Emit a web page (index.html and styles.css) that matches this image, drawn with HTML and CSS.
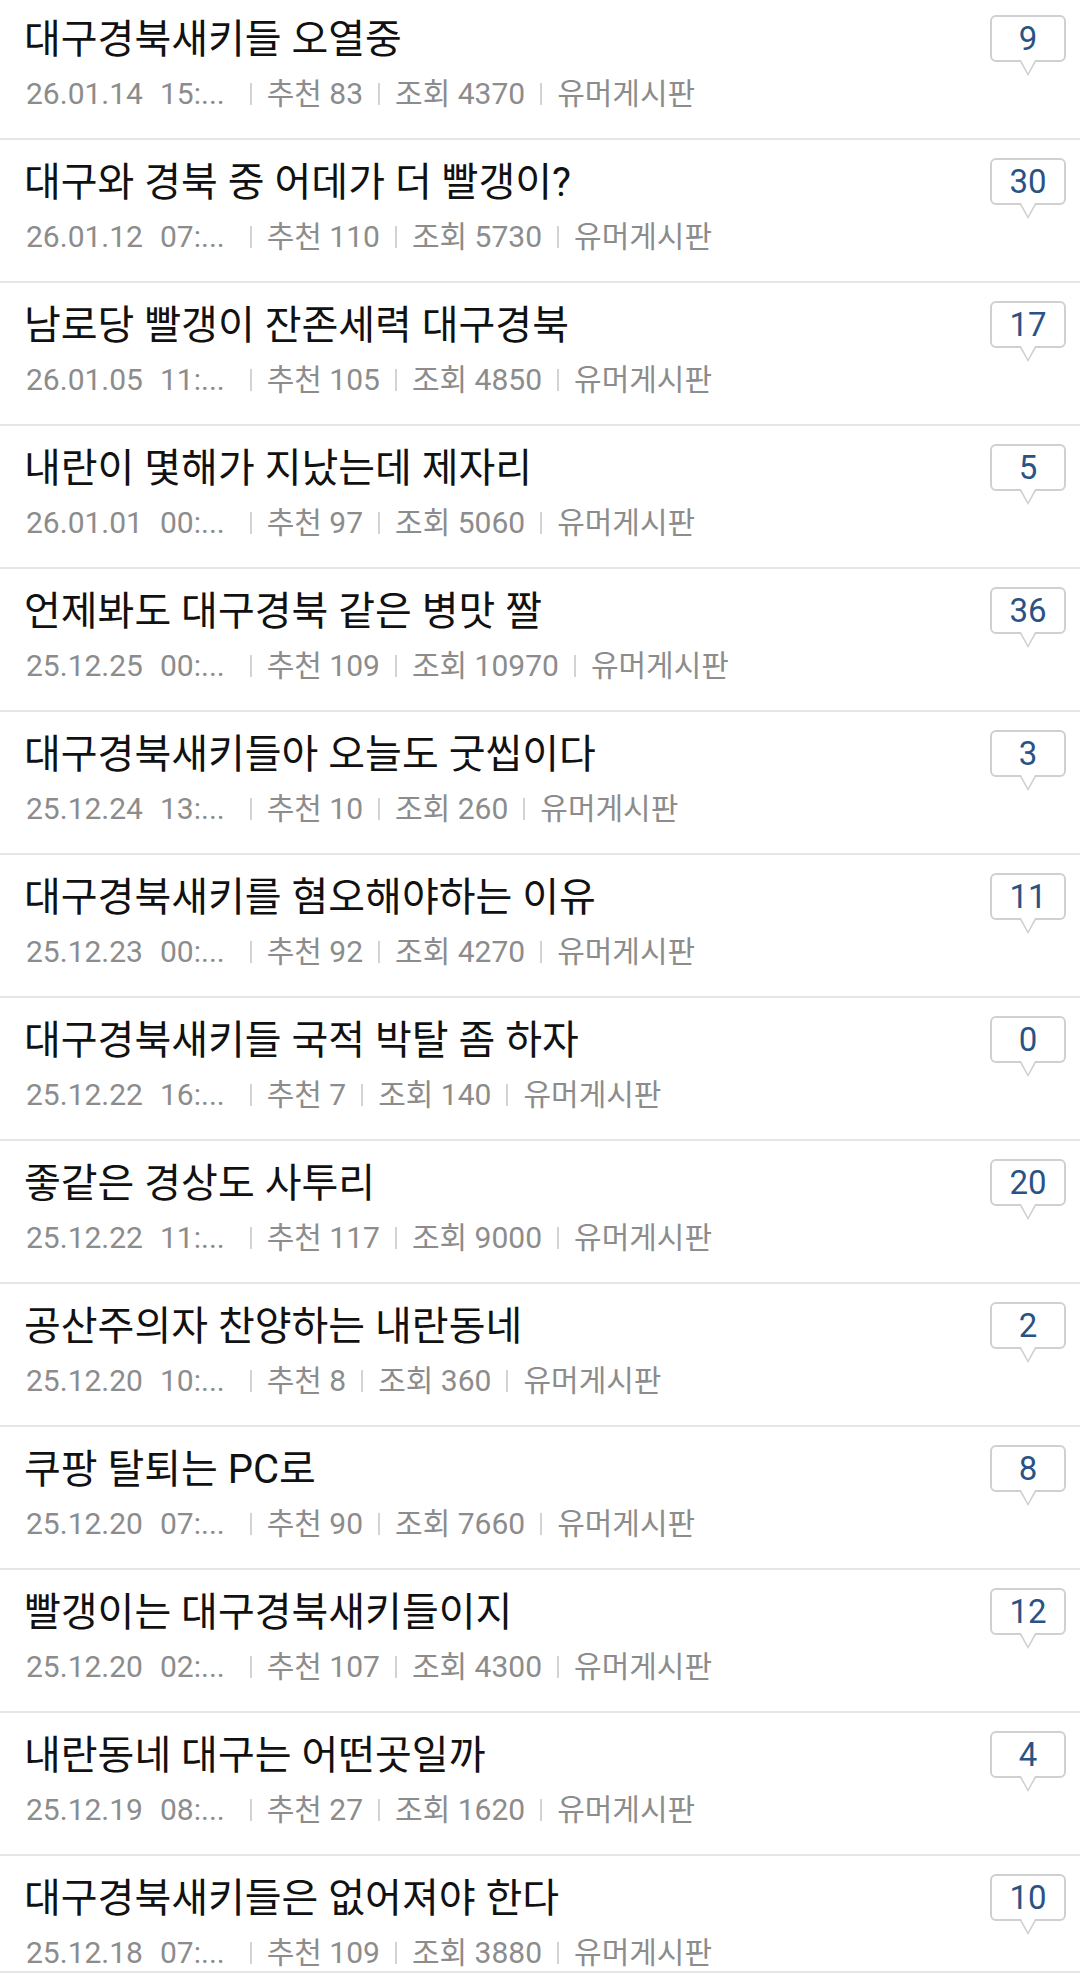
FILE: index.html
```html
<!DOCTYPE html>
<html lang="ko">
<head>
<meta charset="utf-8">
<title>게시글 목록</title>
<link rel="stylesheet" href="styles.css">
</head>
<body>
<ul class="list">
  <li class="post"><div class="post-main"><div class="post-title">대구경북새키들 오열중</div><div class="post-meta"><span class="when"><span>26.01.14</span><span class="time">15:...</span></span><i class="bar"></i><span>추천 83</span><i class="bar"></i><span>조회 4370</span><i class="bar"></i><span>유머게시판</span></div></div><div class="cmt">9</div></li>
  <li class="post"><div class="post-main"><div class="post-title">대구와 경북 중 어데가 더 빨갱이?</div><div class="post-meta"><span class="when"><span>26.01.12</span><span class="time">07:...</span></span><i class="bar"></i><span>추천 110</span><i class="bar"></i><span>조회 5730</span><i class="bar"></i><span>유머게시판</span></div></div><div class="cmt">30</div></li>
  <li class="post"><div class="post-main"><div class="post-title">남로당 빨갱이 잔존세력 대구경북</div><div class="post-meta"><span class="when"><span>26.01.05</span><span class="time">11:...</span></span><i class="bar"></i><span>추천 105</span><i class="bar"></i><span>조회 4850</span><i class="bar"></i><span>유머게시판</span></div></div><div class="cmt">17</div></li>
  <li class="post"><div class="post-main"><div class="post-title">내란이 몇해가 지났는데 제자리</div><div class="post-meta"><span class="when"><span>26.01.01</span><span class="time">00:...</span></span><i class="bar"></i><span>추천 97</span><i class="bar"></i><span>조회 5060</span><i class="bar"></i><span>유머게시판</span></div></div><div class="cmt">5</div></li>
  <li class="post"><div class="post-main"><div class="post-title">언제봐도 대구경북 같은 병맛 짤</div><div class="post-meta"><span class="when"><span>25.12.25</span><span class="time">00:...</span></span><i class="bar"></i><span>추천 109</span><i class="bar"></i><span>조회 10970</span><i class="bar"></i><span>유머게시판</span></div></div><div class="cmt">36</div></li>
  <li class="post"><div class="post-main"><div class="post-title">대구경북새키들아 오늘도 굿씹이다</div><div class="post-meta"><span class="when"><span>25.12.24</span><span class="time">13:...</span></span><i class="bar"></i><span>추천 10</span><i class="bar"></i><span>조회 260</span><i class="bar"></i><span>유머게시판</span></div></div><div class="cmt">3</div></li>
  <li class="post"><div class="post-main"><div class="post-title">대구경북새키를 혐오해야하는 이유</div><div class="post-meta"><span class="when"><span>25.12.23</span><span class="time">00:...</span></span><i class="bar"></i><span>추천 92</span><i class="bar"></i><span>조회 4270</span><i class="bar"></i><span>유머게시판</span></div></div><div class="cmt">11</div></li>
  <li class="post"><div class="post-main"><div class="post-title">대구경북새키들 국적 박탈 좀 하자</div><div class="post-meta"><span class="when"><span>25.12.22</span><span class="time">16:...</span></span><i class="bar"></i><span>추천 7</span><i class="bar"></i><span>조회 140</span><i class="bar"></i><span>유머게시판</span></div></div><div class="cmt">0</div></li>
  <li class="post"><div class="post-main"><div class="post-title">좋같은 경상도 사투리</div><div class="post-meta"><span class="when"><span>25.12.22</span><span class="time">11:...</span></span><i class="bar"></i><span>추천 117</span><i class="bar"></i><span>조회 9000</span><i class="bar"></i><span>유머게시판</span></div></div><div class="cmt">20</div></li>
  <li class="post"><div class="post-main"><div class="post-title">공산주의자 찬양하는 내란동네</div><div class="post-meta"><span class="when"><span>25.12.20</span><span class="time">10:...</span></span><i class="bar"></i><span>추천 8</span><i class="bar"></i><span>조회 360</span><i class="bar"></i><span>유머게시판</span></div></div><div class="cmt">2</div></li>
  <li class="post"><div class="post-main"><div class="post-title">쿠팡 탈퇴는 PC로</div><div class="post-meta"><span class="when"><span>25.12.20</span><span class="time">07:...</span></span><i class="bar"></i><span>추천 90</span><i class="bar"></i><span>조회 7660</span><i class="bar"></i><span>유머게시판</span></div></div><div class="cmt">8</div></li>
  <li class="post"><div class="post-main"><div class="post-title">빨갱이는 대구경북새키들이지</div><div class="post-meta"><span class="when"><span>25.12.20</span><span class="time">02:...</span></span><i class="bar"></i><span>추천 107</span><i class="bar"></i><span>조회 4300</span><i class="bar"></i><span>유머게시판</span></div></div><div class="cmt">12</div></li>
  <li class="post"><div class="post-main"><div class="post-title">내란동네 대구는 어떤곳일까</div><div class="post-meta"><span class="when"><span>25.12.19</span><span class="time">08:...</span></span><i class="bar"></i><span>추천 27</span><i class="bar"></i><span>조회 1620</span><i class="bar"></i><span>유머게시판</span></div></div><div class="cmt">4</div></li>
  <li class="post post--clipped"><div class="post-main"><div class="post-title">대구경북새키들은 없어져야 한다</div><div class="post-meta"><span class="when"><span>25.12.18</span><span class="time">07:...</span></span><i class="bar"></i><span>추천 109</span><i class="bar"></i><span>조회 3880</span><i class="bar"></i><span>유머게시판</span></div></div><div class="cmt">10</div></li>
</ul>
</body>
</html>
```
FILE: styles.css
```css
html, body {
  margin: 0;
  padding: 0;
  background: #ffffff;
}

body {
  width: 1080px;
  height: 1987px;
  overflow: hidden;
  font-family: "Roboto", "Noto Sans CJK KR", sans-serif;
}

.list {
  list-style: none;
  margin: -3px 0 0 0;
  padding: 0;
}

.post {
  display: flex;
  align-items: flex-start;
  box-sizing: border-box;
  height: 143px;
  padding: 18px 14px 0 24px;
  border-bottom: 2px solid #e6e6e6;
}

.post--clipped {
  height: 117px;
  overflow: hidden;
}

.post-main {
  flex: 1;
  min-width: 0;
}

.post-title {
  font-size: 40px;
  font-weight: 400;
  line-height: 50px;
  color: #111111;
  white-space: nowrap;
}

.post-meta {
  display: flex;
  align-items: center;
  gap: 15px;
  margin-top: 9px;
  padding-left: 2px;
  font-size: 30px;
  line-height: 40px;
  color: #8c8c8c;
  white-space: nowrap;
}

.when {
  display: flex;
  margin-right: 10px;
}

.time {
  margin-left: 17px;
}

.bar {
  display: block;
  width: 2px;
  height: 22px;
  background: #d3d3d3;
}

.cmt {
  position: relative;
  box-sizing: border-box;
  width: 76px;
  height: 47px;
  border: 2px solid #d0d0d0;
  border-radius: 6px;
  background: #ffffff;
  font-size: 33px;
  line-height: 43px;
  text-align: center;
  color: #2a5385;
}

.cmt::before,
.cmt::after {
  content: "";
  position: absolute;
  top: 100%;
  left: 50%;
  width: 0;
  height: 0;
  border-style: solid;
  border-color: transparent;
}

.cmt::before {
  margin-left: -9px;
  border-width: 16px 9px 0 9px;
  border-top-color: #d0d0d0;
}

.cmt::after {
  margin-left: -7px;
  border-width: 13px 7px 0 7px;
  border-top-color: #ffffff;
}
```
